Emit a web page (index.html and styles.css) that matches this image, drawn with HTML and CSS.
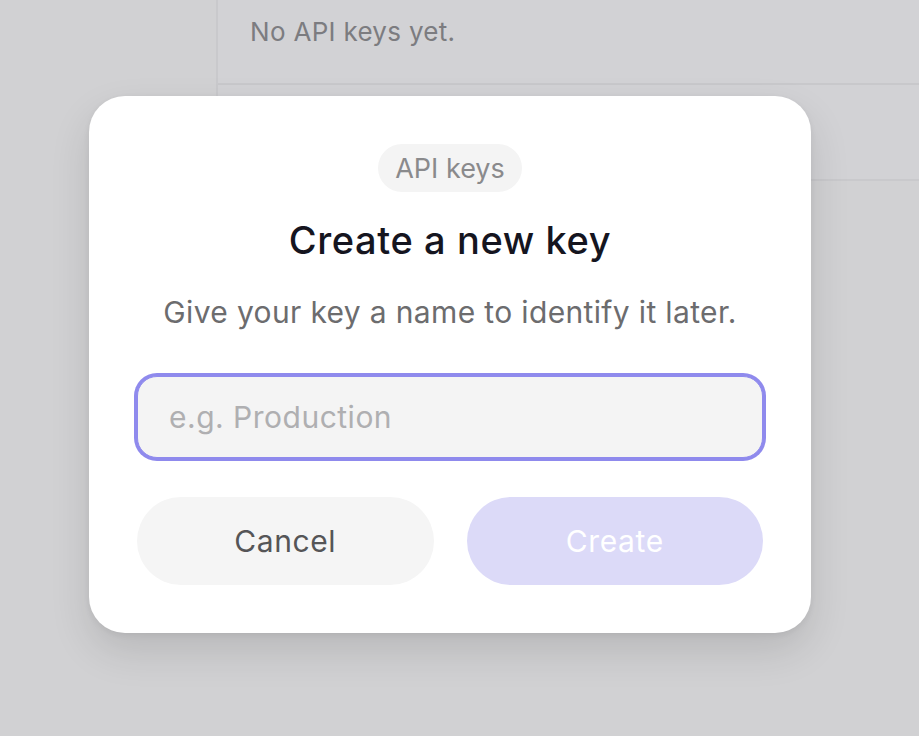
FILE: index.html
```html
<!DOCTYPE html>
<html lang="en">
<head>
<meta charset="utf-8">
<title>Create a new key</title>
<link rel="stylesheet" href="styles.css">
</head>
<body>
<div class="page">
  <section class="panel">
    <div class="row row-empty">No API keys yet.</div>
    <div class="row row-second"></div>
  </section>
</div>
<div class="overlay">
  <div class="modal" role="dialog" aria-labelledby="modal-title">
    <span class="badge">API keys</span>
    <h2 class="title" id="modal-title">Create a new key</h2>
    <p class="subtitle">Give your key a name to identify it later.</p>
    <input class="field" type="text" placeholder="e.g. Production">
    <div class="actions">
      <button class="btn btn-cancel" type="button">Cancel</button>
      <button class="btn btn-create" type="button" disabled>Create</button>
    </div>
  </div>
</div>
</body>
</html>
```

FILE: styles.css
```css
html, body {
  margin: 0;
  padding: 0;
  height: 100%;
}
body {
  background: #d1d1d3;
  font-family: Inter, "Noto Sans", "Liberation Sans", sans-serif;
  overflow: hidden;
}
.page {
  padding-left: 216px;
}
.panel {
  border-left: 2px solid #c9c9cc;
  border-bottom: 2px solid #c9c9cc;
  background: #d2d2d5;
}
.row {
  box-sizing: border-box;
}
.row-empty {
  height: 85px;
  padding: 14px 0 0 32px;
  font-size: 26px;
  line-height: 36px;
  letter-spacing: 0.3px;
  color: #7c7c80;
  border-bottom: 2px solid #c8c8cb;
}
.row-second {
  height: 94px;
}
.overlay {
  position: absolute;
  inset: 0;
}
.modal {
  position: absolute;
  left: 89px;
  top: 96px;
  width: 722px;
  box-sizing: border-box;
  padding: 48px 48px 48px;
  background: #ffffff;
  border-radius: 36px;
  box-shadow: 0 18px 40px rgba(0, 0, 0, 0.12), 0 2px 6px rgba(0, 0, 0, 0.06);
  display: flex;
  flex-direction: column;
  align-items: center;
}
.badge {
  display: inline-flex;
  align-items: center;
  height: 48px;
  padding: 0 17px;
  border-radius: 24px;
  background: #f4f4f4;
  color: #8a8a8c;
  font-size: 27px;
}
.title {
  margin: 26px 0 0;
  font-size: 38px;
  line-height: 44px;
  font-weight: 500;
  color: #15151f;
  letter-spacing: 0.6px;
}
.subtitle {
  margin: 30px 0 0;
  font-size: 30px;
  line-height: 40px;
  letter-spacing: 0.35px;
  color: #6c6c6e;
}
.field {
  margin-top: 44px;
  width: 100%;
  height: 82px;
  box-sizing: border-box;
  padding: 0 31px;
  border: 1px solid #8f8aed;
  box-shadow: 0 0 0 3px #8f8aed;
  border-radius: 20px;
  background: #f4f4f4;
  font-family: inherit;
  font-size: 30px;
  letter-spacing: 0.5px;
  color: #222;
  outline: none;
}
.field::placeholder {
  color: #afafb1;
}
.actions {
  margin-top: 39px;
  width: 100%;
  display: grid;
  grid-template-columns: 1fr 1fr;
  gap: 33px;
}
.btn {
  height: 88px;
  border: none;
  border-radius: 44px;
  font-family: inherit;
  font-size: 30px;
  letter-spacing: 0.6px;
  cursor: pointer;
}
.btn-cancel {
  background: #f5f5f5;
  color: #555557;
}
.btn-create {
  background: #dcdaf8;
  color: #ffffff;
}
```
